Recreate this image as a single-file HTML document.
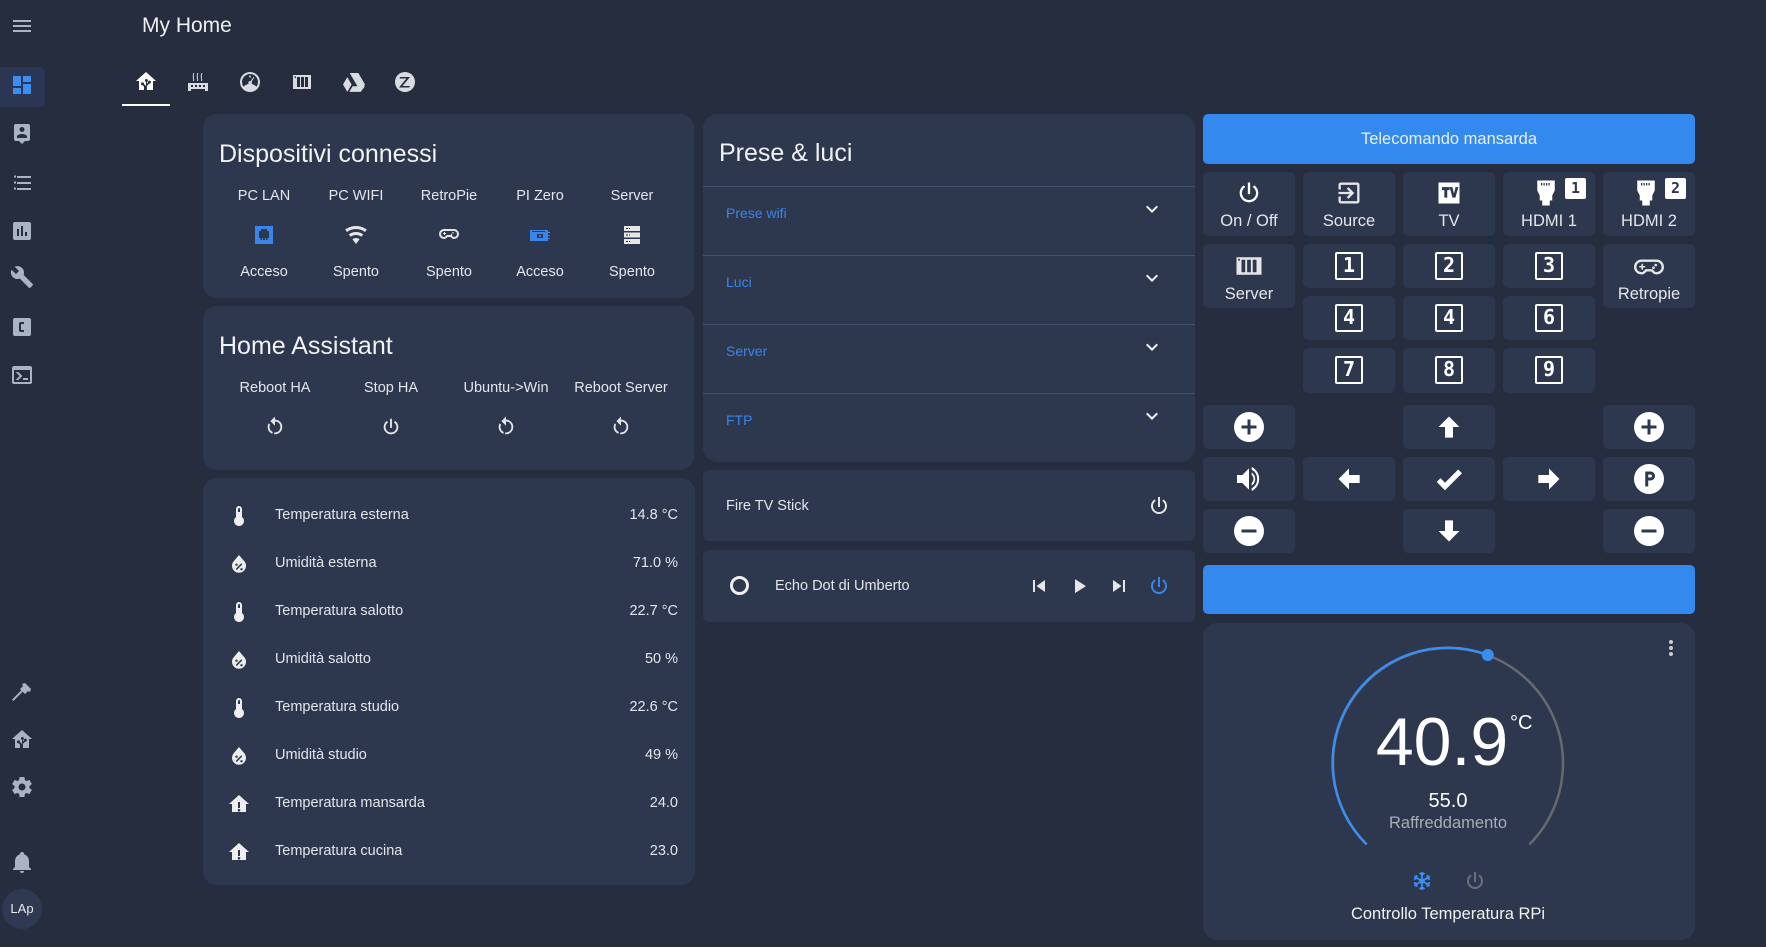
<!DOCTYPE html>
<html><head><meta charset="utf-8"><style>
*{margin:0;padding:0;box-sizing:border-box}
body{width:1766px;height:947px;background:#252d3f;font-family:"Liberation Sans",sans-serif;color:#e4e6ea;position:relative;overflow:hidden}
.a{position:absolute}
.card{position:absolute;background:#2d374e;border-radius:14px}
.btn{position:absolute;background:#2d374e;border-radius:5px;width:92px}
.sb{position:absolute;left:10px;width:24px;height:24px;fill:#a9b3c4}
.t{position:absolute;transform:translateX(-50%);white-space:nowrap;text-align:center}
.ic{position:absolute;fill:#e6e6e6}
.num{position:absolute;width:28px;height:28px;border:2.5px solid #fff;border-radius:2px;color:#fff;font-weight:bold;font-size:20px;line-height:23px;text-align:center;font-family:"DejaVu Sans Mono",monospace}
.row{position:absolute;left:0;width:492px;height:48px;font-size:14.5px}
.row .n{position:absolute;left:72px;top:15px}
.row .v{position:absolute;right:17px;top:15px}
.row svg{position:absolute;left:24px;top:12px;width:24px;height:24px;fill:#eee}
.div{position:absolute;left:0;width:492px;height:1px;background:#46506a}
.bl{position:absolute;left:23px;color:#3a86e8;font-size:14px}
.chev{position:absolute;left:437px;width:24px;height:24px;fill:#eee}
</style></head><body>
<!-- sidebar -->
<svg class="a" style="left:10px;top:14px;width:24px;height:24px;fill:#a9b3c4" viewBox="0 0 24 24"><path d="M3,6H21V8H3V6M3,11H21V13H3V11M3,16H21V18H3V16Z"/></svg>
<div class="a" style="left:0;top:67px;width:45px;height:40px;background:#2a3653;border-radius:0 5px 5px 0"></div>
<svg class="sb" style="top:73px;fill:#3b8ef0" viewBox="0 0 24 24"><path d="M13,3V9H21V3M13,21H21V11H13M3,21H11V15H3M3,13H11V3H3V13Z"/></svg>
<svg class="sb" style="top:122px" viewBox="0 0 24 24"><path d="M18 2H6A2 2 0 0 0 4 4V17A2 2 0 0 0 6 19H9L12 22L15 19H18A2 2 0 0 0 20 17V4A2 2 0 0 0 18 2M12 5A2.5 2.5 0 1 1 12 10A2.5 2.5 0 1 1 12 5M17 16H7V14.5C7 12.8 10.3 12 12 12S17 12.8 17 14.5Z"/></svg>
<svg class="sb" style="top:171px" viewBox="0 0 24 24"><path d="M7,5H21V7H7V5M7,13V11H21V13H7M4,4.5H6V6.5H4V4.5M4,10.5H6V12.5H4M4,16.5H6V18.5H4M7,19V17H21V19H7Z"/></svg>
<svg class="sb" style="top:219px" viewBox="0 0 24 24"><path d="M19 3H5A2 2 0 0 0 3 5V19A2 2 0 0 0 5 21H19A2 2 0 0 0 21 19V5A2 2 0 0 0 19 3M9 17H7V10H9M13 17H11V7H13M17 17H15V13H17Z"/></svg>
<svg class="sb" style="top:265px" viewBox="0 0 24 24"><path d="M22.7,19L13.6,9.9C14.5,7.6 14,4.9 12.1,3C10.1,1 7.1,0.6 4.7,1.7L9,6L6,9L1.6,4.7C0.4,7.1 0.9,10.1 2.9,12.1C4.8,14 7.5,14.5 9.8,13.6L18.9,22.7C19.3,23.1 19.9,23.1 20.3,22.7L22.6,20.4C23.1,20 23.1,19.3 22.7,19Z"/></svg>
<svg class="sb" style="top:315px" viewBox="0 0 24 24"><path d="M19 3H5A2 2 0 0 0 3 5V19A2 2 0 0 0 5 21H19A2 2 0 0 0 21 19V5A2 2 0 0 0 19 3M14 9H11V15H14V17H11A2 2 0 0 1 9 15V9A2 2 0 0 1 11 7H14Z"/></svg>
<svg class="sb" style="top:363px" viewBox="0 0 24 24"><path d="M20,19V7H4V19H20M20,3A2,2 0 0,1 22,5V19A2,2 0 0,1 20,21H4A2,2 0 0,1 2,19V5C2,3.89 2.9,3 4,3H20M13,17V15H18V17H13M9.58,13L5.570,9H8.4L11.7,12.3C12.09,12.69 12.09,13.33 11.7,13.72L8.42,17H5.59L9.58,13Z"/></svg>
<svg class="sb" style="top:680px" viewBox="0 0 24 24"><path d="M2 19.6L12.6 9l1.4 1.4L3.4 21z M12 4l3-1 6 6-1 3-2-1-3 3-5-5 3-3z"/></svg>
<svg class="sb" style="top:728px" viewBox="0 0 24 24"><path d="M12 2L2 11H5V20H10V16.5L8.8 15.3A1.5 1.5 0 1 1 10 14L12 16V11.9A1.5 1.5 0 1 1 12.9 11.9V13.5L14 12.4A1.5 1.5 0 1 1 15.2 13.6L12.9 15.8V20H19V11H22Z"/></svg>
<svg class="sb" style="top:775px" viewBox="0 0 24 24"><path d="M12,15.5A3.5,3.5 0 0,1 8.5,12A3.5,3.5 0 0,1 12,8.5A3.5,3.5 0 0,1 15.5,12A3.5,3.5 0 0,1 12,15.5M19.43,12.97C19.47,12.65 19.5,12.33 19.5,12C19.5,11.67 19.47,11.34 19.43,11L21.54,9.37C21.73,9.22 21.78,8.95 21.66,8.73L19.660,5.27C19.54,5.05 19.27,4.96 19.05,5.05L16.56,6.05C16.04,5.66 15.5,5.32 14.87,5.07L14.5,2.42C14.46,2.18 14.25,2 14,2H10C9.75,2 9.54,2.18 9.5,2.42L9.13,5.07C8.5,5.32 7.96,5.66 7.44,6.05L4.95,5.05C4.73,4.96 4.46,5.05 4.34,5.27L2.34,8.73C2.21,8.95 2.27,9.22 2.46,9.37L4.57,11C4.53,11.34 4.5,11.67 4.5,12C4.5,12.33 4.53,12.65 4.57,12.97L2.46,14.63C2.27,14.78 2.21,15.05 2.34,15.27L4.34,18.73C4.46,18.95 4.73,19.03 4.95,18.95L7.44,17.94C7.96,18.34 8.5,18.68 9.13,18.93L9.5,21.58C9.54,21.82 9.75,22 10,22H14C14.25,22 14.46,21.82 14.5,21.58L14.87,18.93C15.5,18.67 16.04,18.34 16.56,17.94L19.05,18.95C19.27,19.03 19.54,18.95 19.66,18.73L21.66,15.27C21.78,15.05 21.73,14.78 21.54,14.63L19.43,12.97Z"/></svg>
<svg class="sb" style="top:850px" viewBox="0 0 24 24"><path d="M21,19V20H3V19L5,17V11C5,7.9 7.03,5.17 10,4.29C10,4.19 10,4.1 10,4A2,2 0 0,1 12,2A2,2 0 0,1 14,4C14,4.1 14,4.19 14,4.29C16.97,5.17 19,7.9 19,11V17L21,19M14,21A2,2 0 0,1 12,23A2,2 0 0,1 10,21"/></svg>
<div class="a" style="left:2px;top:889px;width:40px;height:40px;border-radius:50%;background:#2f3a52;color:#e8e8e8;font-size:13px;line-height:40px;text-align:center">LAp</div>

<div class="a" style="left:142px;top:14px;font-size:21px;color:#f0f0f0">My Home</div>
<!-- tabs -->
<svg class="ic" style="left:134px;top:70px;width:24px;height:24px;fill:#fff" viewBox="0 0 24 24"><path d="M12 2L2 11H5V20H10V16.5L8.8 15.3A1.5 1.5 0 1 1 10 14L12 16V11.9A1.5 1.5 0 1 1 12.9 11.9V13.5L14 12.4A1.5 1.5 0 1 1 15.2 13.6L12.9 15.8V20H19V11H22Z"/></svg>
<div class="a" style="left:122px;top:104px;width:48px;height:2px;background:#fff"></div>
<svg class="ic" style="left:186px;top:70px;width:24px;height:24px;fill:#d8dbe0" viewBox="0 0 24 24"><path d="M2 13H22V21H19V19H5V21H2V13M5 15V17H7V15H5M9 15V17H11V15H9M13 15V17H15V15H13M17 15V17H19V15H17M7 3C8 4 6 5 7 7 6 8 8 9 7 11H8C9 9 7 8 8 7 7 5 9 4 8 3M11 3C12 4 10 5 11 7 10 8 12 9 11 11H12C13 9 11 8 12 7 11 5 13 4 12 3M15 3C16 4 14 5 15 7 14 8 16 9 15 11H16C17 9 15 8 16 7 15 5 17 4 16 3Z"/></svg>
<svg class="ic" style="left:238px;top:70px;width:24px;height:24px;fill:#d8dbe0" viewBox="0 0 24 24"><path d="M12 2A10 10 0 1 0 22 12 10 10 0 0 0 12 2M12 4A8 8 0 0 1 20 12 8 8 0 0 1 18.5 16.7 9 9 0 0 0 5.5 16.7 8 8 0 0 1 4 12 8 8 0 0 1 12 4M12 5.5A1 1 0 1 0 13 6.5 1 1 0 0 0 12 5.5M15.5 7L12.6 11.1A1.8 1.8 0 1 0 13.6 11.8L16.3 7.5Z"/></svg>
<svg class="ic" style="left:290px;top:70px;width:24px;height:24px;fill:#d8dbe0" viewBox="0 0 24 24"><path d="M3 5H21V19H3V5M4.5 6.5V8H6V6.5M7 7V17H10V7M11 7V17H14V7M15 7V17H18V7Z" fill-rule="evenodd"/></svg>
<svg class="ic" style="left:342px;top:70px;width:24px;height:24px;fill:#d8dbe0" viewBox="0 0 24 24"><path d="M7.7 3H16.3L23 14.5 18.7 21.9 12 10.4ZM1 14.5L5.3 7.1 9.6 14.5 5.3 21.9ZM10.6 16.3H23L18.7 21.9H7.3Z"/></svg>
<svg class="ic" style="left:393px;top:70px;width:24px;height:24px;fill:#d8dbe0" viewBox="0 0 24 24"><path d="M12 2A10 10 0 1 0 22 12 10 10 0 0 0 12 2M7 7H17L9.5 16H17L16 17.5H6L13.5 8.5H6.5Z"/></svg>

<!-- card 1 -->
<div class="card" style="left:203px;top:114px;width:491px;height:184px">
 <div class="a" style="left:16px;top:26px;font-size:25px;color:#f2f2f2">Dispositivi connessi</div>
 <div class="t" style="left:61px;top:74px;font-size:14.5px">PC LAN</div>
 <div class="t" style="left:153px;top:74px;font-size:14.5px">PC WIFI</div>
 <div class="t" style="left:246px;top:74px;font-size:14.5px">RetroPie</div>
 <div class="t" style="left:337px;top:74px;font-size:14.5px">PI Zero</div>
 <div class="t" style="left:429px;top:74px;font-size:14.5px">Server</div>
 <svg class="ic" style="left:49px;top:109px;width:24px;height:24px;fill:#3a86e8" viewBox="0 0 24 24"><path d="M3 3H21V21H3ZM7 8V15H8.5V17H10V15H11V17H13V15H14V17H15.5V15H17V8H15V6H9V8Z" fill-rule="evenodd"/></svg>
 <svg class="ic" style="left:141px;top:109px;width:24px;height:24px" viewBox="0 0 24 24"><path d="M12,21L15.6,16.2C14.6,15.45 13.35,15 12,15C10.65,15 9.4,15.45 8.4,16.2L12,21M12,3C7.95,3 4.21,4.34 1.2,6.6L3,9C5.5,7.12 8.62,6 12,6C15.38,6 18.5,7.12 21,9L22.8,6.6C19.79,4.34 16.05,3 12,3M12,9C9.3,9 6.81,9.89 4.8,11.4L6.6,13.8C8.1,12.67 9.97,12 12,12C14.03,12 15.9,12.67 17.4,13.8L19.2,11.4C17.19,9.89 14.7,9 12,9Z"/></svg>
 <svg class="ic" style="left:234px;top:109px;width:24px;height:24px" viewBox="0 0 24 24"><path d="M7 6H17A5 5 0 0 1 17 16C15.5 16 14.5 15 13.5 14H10.5C9.5 15 8.5 16 7 16A5 5 0 0 1 7 6M7 8A3 3 0 0 0 7 14C8 14 8.7 13 9.7 12H14.3C15.3 13 16 14 17 14A3 3 0 0 0 17 8ZM6 10H7V9H8V10H9V11H8V12H7V11H6ZM16 9A.8.8 0 1 1 16 10.6.8.8 0 1 1 16 9M14.5 10.8A.8.8 0 1 1 14.5 12.4.8.8 0 1 1 14.5 10.8Z"/></svg>
 <svg class="ic" style="left:325px;top:109px;width:24px;height:24px;fill:#3a86e8" viewBox="0 0 24 24"><path d="M2 7H20V9H22V10H20V12H22V13H20V15H22V16H20V18H2ZM9 11V15H15V11ZM11 12H13V14H11ZM4 8V9H17V8Z" fill-rule="evenodd"/></svg>
 <svg class="ic" style="left:417px;top:109px;width:24px;height:24px" viewBox="0 0 24 24"><path d="M4 3H20V8H4ZM4 9.5H20V14.5H4ZM4 16H20V21H4ZM6 5V6H8V5ZM9 5V6H10V5ZM6 11.5V12.5H8V11.5ZM9 11.5V12.5H10V11.5ZM6 18V19H8V18ZM9 18V19H10V18Z" fill-rule="evenodd"/></svg>
 <div class="t" style="left:61px;top:150px;font-size:14.5px">Acceso</div>
 <div class="t" style="left:153px;top:150px;font-size:14.5px">Spento</div>
 <div class="t" style="left:246px;top:150px;font-size:14.5px">Spento</div>
 <div class="t" style="left:337px;top:150px;font-size:14.5px">Acceso</div>
 <div class="t" style="left:429px;top:150px;font-size:14.5px">Spento</div>
</div>
<!-- card 2 -->
<div class="card" style="left:203px;top:306px;width:491px;height:164px">
 <div class="a" style="left:16px;top:26px;font-size:25px;color:#f2f2f2">Home Assistant</div>
 <div class="t" style="left:72px;top:74px;font-size:14.5px">Reboot HA</div>
 <div class="t" style="left:188px;top:74px;font-size:14.5px">Stop HA</div>
 <div class="t" style="left:303px;top:74px;font-size:14.5px">Ubuntu-&gt;Win</div>
 <div class="t" style="left:418px;top:74px;font-size:14.5px">Reboot Server</div>
 <svg class="ic" style="left:61px;top:110px;width:22px;height:22px" viewBox="0 0 24 24"><path d="M12,4C14.1,4 16.1,4.8 17.6,6.3C20.7,9.4 20.7,14.5 17.6,17.6C15.8,19.5 13.3,20.2 10.9,19.9L11.4,17.9C13.1,18.1 14.9,17.5 16.2,16.2C18.5,13.9 18.5,10.1 16.2,7.7C15.1,6.6 13.5,6 12,6V10.6L7,5.6L12,0.6V4M6.3,17.6C3.7,15 3.3,11 5.1,7.9L6.6,9.4C5.5,11.6 5.9,14.4 7.8,16.2C8.3,16.7 8.9,17.1 9.6,17.4L9,19.4C8,19 7.1,18.4 6.3,17.6Z"/></svg>
 <svg class="ic" style="left:177px;top:110px;width:22px;height:22px" viewBox="0 0 24 24"><path d="M16.56,5.44L15.11,6.89C16.84,7.94 18,9.83 18,12A6,6 0 0,1 12,18A6,6 0 0,1 6,12C6,9.83 7.16,7.94 8.88,6.88L7.44,5.44C5.36,6.88 4,9.28 4,12A8,8 0 0,0 12,20A8,8 0 0,0 20,12C20,9.28 18.64,6.88 16.56,5.44M13,3H11V13H13"/></svg>
 <svg class="ic" style="left:292px;top:110px;width:22px;height:22px" viewBox="0 0 24 24"><path d="M12,4C14.1,4 16.1,4.8 17.6,6.3C20.7,9.4 20.7,14.5 17.6,17.6C15.8,19.5 13.3,20.2 10.9,19.9L11.4,17.9C13.1,18.1 14.9,17.5 16.2,16.2C18.5,13.9 18.5,10.1 16.2,7.7C15.1,6.6 13.5,6 12,6V10.6L7,5.6L12,0.6V4M6.3,17.6C3.7,15 3.3,11 5.1,7.9L6.6,9.4C5.5,11.6 5.9,14.4 7.8,16.2C8.3,16.7 8.9,17.1 9.6,17.4L9,19.4C8,19 7.1,18.4 6.3,17.6Z"/></svg>
 <svg class="ic" style="left:407px;top:110px;width:22px;height:22px" viewBox="0 0 24 24"><path d="M12,4C14.1,4 16.1,4.8 17.6,6.3C20.7,9.4 20.7,14.5 17.6,17.6C15.8,19.5 13.3,20.2 10.9,19.9L11.4,17.9C13.1,18.1 14.9,17.5 16.2,16.2C18.5,13.9 18.5,10.1 16.2,7.7C15.1,6.6 13.5,6 12,6V10.6L7,5.6L12,0.6V4M6.3,17.6C3.7,15 3.3,11 5.1,7.9L6.6,9.4C5.5,11.6 5.9,14.4 7.8,16.2C8.3,16.7 8.9,17.1 9.6,17.4L9,19.4C8,19 7.1,18.4 6.3,17.6Z"/></svg>
</div>
<!-- card 3 sensors -->
<div class="card" style="left:203px;top:478px;width:492px;height:407px">
 <div class="row" style="top:14px"><svg viewBox="0 0 24 24"><path d="M15 13V5A3 3 0 0 0 9 5V13A5 5 0 1 0 15 13M12 4A1 1 0 0 1 13 5V8H11V5A1 1 0 0 1 12 4Z"/></svg><span class="n">Temperatura esterna</span><span class="v">14.8 °C</span></div>
 <div class="row" style="top:62px"><svg viewBox="0 0 24 24"><path d="M12 3L6.3 9.7A7 7 0 1 0 17.7 9.7ZM9.5 11.5A1.2 1.2 0 1 1 9.5 13.9 1.2 1.2 0 1 1 9.5 11.5M14.5 16.1A1.2 1.2 0 1 1 14.5 18.5 1.2 1.2 0 1 1 14.5 16.1M14.2 11.3L15.3 12.4 9.8 18 8.7 16.9Z" fill-rule="evenodd"/></svg><span class="n">Umidità esterna</span><span class="v">71.0 %</span></div>
 <div class="row" style="top:110px"><svg viewBox="0 0 24 24"><path d="M15 13V5A3 3 0 0 0 9 5V13A5 5 0 1 0 15 13M12 4A1 1 0 0 1 13 5V8H11V5A1 1 0 0 1 12 4Z"/></svg><span class="n">Temperatura salotto</span><span class="v">22.7 °C</span></div>
 <div class="row" style="top:158px"><svg viewBox="0 0 24 24"><path d="M12 3L6.3 9.7A7 7 0 1 0 17.7 9.7ZM9.5 11.5A1.2 1.2 0 1 1 9.5 13.9 1.2 1.2 0 1 1 9.5 11.5M14.5 16.1A1.2 1.2 0 1 1 14.5 18.5 1.2 1.2 0 1 1 14.5 16.1M14.2 11.3L15.3 12.4 9.8 18 8.7 16.9Z" fill-rule="evenodd"/></svg><span class="n">Umidità salotto</span><span class="v">50 %</span></div>
 <div class="row" style="top:206px"><svg viewBox="0 0 24 24"><path d="M15 13V5A3 3 0 0 0 9 5V13A5 5 0 1 0 15 13M12 4A1 1 0 0 1 13 5V8H11V5A1 1 0 0 1 12 4Z"/></svg><span class="n">Temperatura studio</span><span class="v">22.6 °C</span></div>
 <div class="row" style="top:254px"><svg viewBox="0 0 24 24"><path d="M12 3L6.3 9.7A7 7 0 1 0 17.7 9.7ZM9.5 11.5A1.2 1.2 0 1 1 9.5 13.9 1.2 1.2 0 1 1 9.5 11.5M14.5 16.1A1.2 1.2 0 1 1 14.5 18.5 1.2 1.2 0 1 1 14.5 16.1M14.2 11.3L15.3 12.4 9.8 18 8.7 16.9Z" fill-rule="evenodd"/></svg><span class="n">Umidità studio</span><span class="v">49 %</span></div>
 <div class="row" style="top:302px"><svg viewBox="0 0 24 24"><path d="M12 3L2 12H5V20H19V12H22ZM11 10H13V16H11ZM12 17A1.3 1.3 0 1 1 12 19.6 1.3 1.3 0 1 1 12 17Z" fill-rule="evenodd"/></svg><span class="n">Temperatura mansarda</span><span class="v">24.0</span></div>
 <div class="row" style="top:350px"><svg viewBox="0 0 24 24"><path d="M12 3L2 12H5V20H19V12H22ZM11 10H13V16H11ZM12 17A1.3 1.3 0 1 1 12 19.6 1.3 1.3 0 1 1 12 17Z" fill-rule="evenodd"/></svg><span class="n">Temperatura cucina</span><span class="v">23.0</span></div>
</div>

<!-- middle -->
<div class="card" style="left:703px;top:114px;width:492px;height:348px">
 <div class="a" style="left:16px;top:25px;font-size:25px;color:#f2f2f2">Prese &amp; luci</div>
 <div class="div" style="top:72px"></div>
 <div class="bl" style="top:91px">Prese wifi</div><svg class="chev" style="top:83px" viewBox="0 0 24 24"><path d="M7.41,8.58L12,13.17L16.59,8.58L18,10L12,16L6,10L7.41,8.58Z"/></svg>
 <div class="div" style="top:141px"></div>
 <div class="bl" style="top:160px">Luci</div><svg class="chev" style="top:152px" viewBox="0 0 24 24"><path d="M7.41,8.58L12,13.17L16.59,8.58L18,10L12,16L6,10L7.41,8.58Z"/></svg>
 <div class="div" style="top:210px"></div>
 <div class="bl" style="top:229px">Server</div><svg class="chev" style="top:221px" viewBox="0 0 24 24"><path d="M7.41,8.58L12,13.17L16.59,8.58L18,10L12,16L6,10L7.41,8.58Z"/></svg>
 <div class="div" style="top:279px"></div>
 <div class="bl" style="top:298px">FTP</div><svg class="chev" style="top:290px" viewBox="0 0 24 24"><path d="M7.41,8.58L12,13.17L16.59,8.58L18,10L12,16L6,10L7.41,8.58Z"/></svg>
</div>
<div class="card" style="left:703px;top:470px;width:492px;height:71px;border-radius:6px">
 <div class="a" style="left:23px;top:28px;font-size:14.5px">Fire TV Stick</div>
 <svg class="ic" style="left:444px;top:24px;width:24px;height:24px" viewBox="0 0 24 24"><path d="M16.56,5.44L15.11,6.89C16.84,7.94 18,9.83 18,12A6,6 0 0,1 12,18A6,6 0 0,1 6,12C6,9.83 7.16,7.94 8.88,6.88L7.44,5.44C5.36,6.88 4,9.28 4,12A8,8 0 0,0 12,20A8,8 0 0,0 20,12C20,9.28 18.64,6.88 16.56,5.44M13,3H11V13H13"/></svg>
</div>
<div class="card" style="left:703px;top:550px;width:492px;height:72px;border-radius:6px">
 <div class="a" style="left:27px;top:26px;width:19px;height:19px;border:3px solid #eee;border-radius:50%"></div>
 <div class="a" style="left:72px;top:28px;font-size:14.5px">Echo Dot di Umberto</div>
 <svg class="ic" style="left:324px;top:24px;width:24px;height:24px" viewBox="0 0 24 24"><path d="M6,18V6H8V18H6M9.5,12L18,6V18L9.5,12Z"/></svg>
 <svg class="ic" style="left:364px;top:24px;width:24px;height:24px" viewBox="0 0 24 24"><path d="M8,5.14V19.14L19,12.14L8,5.14Z"/></svg>
 <svg class="ic" style="left:404px;top:24px;width:24px;height:24px" viewBox="0 0 24 24"><path d="M16,18H18V6H16M6,18L14.5,12L6,6V18Z"/></svg>
 <svg class="ic" style="left:444px;top:24px;width:24px;height:24px;fill:#3a86e8" viewBox="0 0 24 24"><path d="M16.56,5.44L15.11,6.89C16.84,7.94 18,9.83 18,12A6,6 0 0,1 12,18A6,6 0 0,1 6,12C6,9.83 7.16,7.94 8.88,6.88L7.44,5.44C5.36,6.88 4,9.28 4,12A8,8 0 0,0 12,20A8,8 0 0,0 20,12C20,9.28 18.64,6.88 16.56,5.44M13,3H11V13H13"/></svg>
</div>

<!-- remote -->
<div class="a" style="left:1203px;top:114px;width:492px;height:50px;background:#3489ef;border-radius:5px;color:#e8eef8;font-size:16.5px;line-height:50px;text-align:center">Telecomando mansarda</div>
<!-- row1 -->
<div class="btn" style="left:1203px;top:172px;height:64px"><svg class="ic" style="left:32px;top:7px;width:28px;height:28px;fill:#fff" viewBox="0 0 24 24"><path d="M16.56,5.44L15.11,6.89C16.84,7.94 18,9.83 18,12A6,6 0 0,1 12,18A6,6 0 0,1 6,12C6,9.83 7.16,7.94 8.88,6.88L7.44,5.44C5.36,6.88 4,9.28 4,12A8,8 0 0,0 12,20A8,8 0 0,0 20,12C20,9.28 18.64,6.88 16.56,5.44M13,3H11V13H13"/></svg><div class="t" style="left:46px;top:40px;font-size:16.5px">On / Off</div></div>
<div class="btn" style="left:1303px;top:172px;height:64px"><svg class="ic" style="left:32px;top:7px;width:28px;height:28px" viewBox="0 0 24 24"><path d="M19 3H5A2 2 0 0 0 3 5V9H5V5H19V19H5V15H3V19A2 2 0 0 0 5 21H19A2 2 0 0 0 21 19V5A2 2 0 0 0 19 3M10.08 15.58L11.5 17L16.5 12L11.5 7L10.08 8.41L12.67 11H3V13H12.67Z"/></svg><div class="t" style="left:46px;top:40px;font-size:16.5px">Source</div></div>
<div class="btn" style="left:1403px;top:172px;height:64px"><svg class="ic" style="left:32px;top:7px;width:28px;height:28px;fill:#fff" viewBox="0 0 24 24"><path d="M3 3H21V21H3ZM6 7V9.5H8V16H10.5V9.5H12.5V7ZM12.5 7L15 16H17.5L20 7H17.6L16.25 12.5 14.9 7Z" fill-rule="evenodd"/></svg><div class="t" style="left:46px;top:40px;font-size:16.5px">TV</div></div>
<div class="btn" style="left:1503px;top:172px;height:64px"><svg class="ic" style="left:30px;top:6px;width:26px;height:30px;fill:#fff" viewBox="0 0 20 24"><path d="M3 2H17V10L15 14V18H13V22H7V18H5V14L3 10ZM6 4V6H7V4ZM8 4V6H9V4ZM10 4V6H11V4ZM12 4V6H13V4Z" fill-rule="evenodd"/></svg><div class="a" style="left:62px;top:6px;width:21px;height:21px;background:#fff;border-radius:2px;color:#2d374e;font-weight:bold;font-size:15px;line-height:21px;text-align:center;font-family:'DejaVu Sans Mono',monospace">1</div><div class="t" style="left:46px;top:40px;font-size:16.5px">HDMI 1</div></div>
<div class="btn" style="left:1603px;top:172px;height:64px"><svg class="ic" style="left:30px;top:6px;width:26px;height:30px;fill:#fff" viewBox="0 0 20 24"><path d="M3 2H17V10L15 14V18H13V22H7V18H5V14L3 10ZM6 4V6H7V4ZM8 4V6H9V4ZM10 4V6H11V4ZM12 4V6H13V4Z" fill-rule="evenodd"/></svg><div class="a" style="left:62px;top:6px;width:21px;height:21px;background:#fff;border-radius:2px;color:#2d374e;font-weight:bold;font-size:15px;line-height:21px;text-align:center;font-family:'DejaVu Sans Mono',monospace">2</div><div class="t" style="left:46px;top:40px;font-size:16.5px">HDMI 2</div></div>
<!-- row2 -->
<div class="btn" style="left:1203px;top:244px;height:64px"><svg class="ic" style="left:31px;top:7px;width:30px;height:30px" viewBox="0 0 24 24"><path d="M2 5H22V19H2ZM3.3 6.3V7.7H4.7V6.3ZM6 7V17H9V7ZM10.5 7V17H13.5V7ZM15 7V17H18V7Z" fill-rule="evenodd"/></svg><div class="t" style="left:46px;top:41px;font-size:16.5px">Server</div></div>
<div class="btn" style="left:1603px;top:244px;height:64px"><svg class="ic" style="left:28px;top:5px;width:36px;height:36px" viewBox="0 0 24 24"><path d="M7 7H17A5 5 0 0 1 17 17C15.5 17 14.5 16 13.5 15H10.5C9.5 16 8.5 17 7 17A5 5 0 0 1 7 7M7 8.6A3.4 3.4 0 0 0 7 15.4C8 15.4 8.7 14.4 9.7 13.4H14.3C15.3 14.4 16 15.4 17 15.4A3.4 3.4 0 0 0 17 8.6ZM5.5 11.3H7V9.8H8V11.3H9.5V12.3H8V13.8H7V12.3H5.5ZM16.5 9.8A.9.9 0 1 1 16.5 11.6.9.9 0 1 1 16.5 9.8M15 11.6A.9.9 0 1 1 15 13.4.9.9 0 1 1 15 11.6Z"/></svg><div class="t" style="left:46px;top:41px;font-size:16.5px">Retropie</div></div>
<div class="btn" style="left:1303px;top:244px;height:44px"><div class="num" style="left:32px;top:8px">1</div></div>
<div class="btn" style="left:1403px;top:244px;height:44px"><div class="num" style="left:32px;top:8px">2</div></div>
<div class="btn" style="left:1503px;top:244px;height:44px"><div class="num" style="left:32px;top:8px">3</div></div>
<div class="btn" style="left:1303px;top:296px;height:44px"><div class="num" style="left:32px;top:8px">4</div></div>
<div class="btn" style="left:1403px;top:296px;height:44px"><div class="num" style="left:32px;top:8px">4</div></div>
<div class="btn" style="left:1503px;top:296px;height:44px"><div class="num" style="left:32px;top:8px">6</div></div>
<div class="btn" style="left:1303px;top:348px;height:45px"><div class="num" style="left:32px;top:8px">7</div></div>
<div class="btn" style="left:1403px;top:348px;height:45px"><div class="num" style="left:32px;top:8px">8</div></div>
<div class="btn" style="left:1503px;top:348px;height:45px"><div class="num" style="left:32px;top:8px">9</div></div>
<!-- arrows -->
<div class="btn" style="left:1203px;top:405px;height:44px"><svg class="ic" style="left:28px;top:4px;width:36px;height:36px;fill:#fff" viewBox="0 0 24 24"><path d="M17,13H13V17H11V13H7V11H11V7H13V11H17M12,2A10,10 0 0,0 2,12A10,10 0 0,0 12,22A10,10 0 0,0 22,12A10,10 0 0,0 12,2Z"/></svg></div>
<div class="btn" style="left:1403px;top:405px;height:44px"><svg class="ic" style="left:30px;top:6px;width:32px;height:32px;fill:#fff" viewBox="0 0 24 24"><path d="M15,20H9V12H4.16L12,4.16L19.84,12H15V20Z"/></svg></div>
<div class="btn" style="left:1603px;top:405px;height:44px"><svg class="ic" style="left:28px;top:4px;width:36px;height:36px;fill:#fff" viewBox="0 0 24 24"><path d="M17,13H13V17H11V13H7V11H11V7H13V11H17M12,2A10,10 0 0,0 2,12A10,10 0 0,0 12,22A10,10 0 0,0 22,12A10,10 0 0,0 12,2Z"/></svg></div>
<div class="btn" style="left:1203px;top:457px;height:44px"><svg class="ic" style="left:30px;top:6px;width:32px;height:32px;fill:#fff" viewBox="0 0 24 24"><path d="M3 9H7L12 4V20L7 15H3ZM14 7A6 6 0 0 1 14 17V15A4 4 0 0 0 14 9ZM14 3A10 10 0 0 1 14 21V19A8 8 0 0 0 14 5Z"/></svg></div>
<div class="btn" style="left:1303px;top:457px;height:44px"><svg class="ic" style="left:30px;top:6px;width:32px;height:32px;fill:#fff" viewBox="0 0 24 24"><path d="M20,9V15H12V19.84L4.16,12L12,4.16V9H20Z"/></svg></div>
<div class="btn" style="left:1403px;top:457px;height:44px"><svg class="ic" style="left:30px;top:6px;width:32px;height:32px;fill:#fff" viewBox="0 0 24 24"><path d="M9,20.42L2.79,14.21L5.62,11.38L9,14.77L18.88,4.88L21.71,7.71L9,20.42Z"/></svg></div>
<div class="btn" style="left:1503px;top:457px;height:44px"><svg class="ic" style="left:30px;top:6px;width:32px;height:32px;fill:#fff" viewBox="0 0 24 24"><path d="M4,15V9H12V4.16L19.84,12L12,19.84V15H4Z"/></svg></div>
<div class="btn" style="left:1603px;top:457px;height:44px"><svg class="ic" style="left:28px;top:4px;width:36px;height:36px;fill:#fff" viewBox="0 0 24 24"><path d="M12 2A10 10 0 1 0 22 12 10 10 0 0 0 12 2M9.5 7H13A3 3 0 0 1 13 13H11.5V17H9.5ZM11.5 9V11H13A1 1 0 0 0 13 9Z" fill-rule="evenodd"/></svg></div>
<div class="btn" style="left:1203px;top:509px;height:44px"><svg class="ic" style="left:28px;top:4px;width:36px;height:36px;fill:#fff" viewBox="0 0 24 24"><path d="M17,13H7V11H17M12,2A10,10 0 0,0 2,12A10,10 0 0,0 12,22A10,10 0 0,0 22,12A10,10 0 0,0 12,2Z"/></svg></div>
<div class="btn" style="left:1403px;top:509px;height:44px"><svg class="ic" style="left:30px;top:6px;width:32px;height:32px;fill:#fff" viewBox="0 0 24 24"><path d="M9,4H15V12H19.84L12,19.84L4.16,12H9V4Z"/></svg></div>
<div class="btn" style="left:1603px;top:509px;height:44px"><svg class="ic" style="left:28px;top:4px;width:36px;height:36px;fill:#fff" viewBox="0 0 24 24"><path d="M17,13H7V11H17M12,2A10,10 0 0,0 2,12A10,10 0 0,0 12,22A10,10 0 0,0 22,12A10,10 0 0,0 12,2Z"/></svg></div>

<div class="a" style="left:1203px;top:565px;width:492px;height:49px;background:#3489ef;border-radius:5px"></div>

<!-- thermostat -->
<div class="card" style="left:1203px;top:623px;width:492px;height:317px">
 <svg class="ic" style="left:456px;top:13px;width:24px;height:24px;fill:#ccc" viewBox="0 0 24 24"><path d="M12,16A2,2 0 0,1 14,18A2,2 0 0,1 12,20A2,2 0 0,1 10,18A2,2 0 0,1 12,16M12,10A2,2 0 0,1 14,12A2,2 0 0,1 12,14A2,2 0 0,1 10,12A2,2 0 0,1 12,10M12,4A2,2 0 0,1 14,6A2,2 0 0,1 12,8A2,2 0 0,1 10,6A2,2 0 0,1 12,4Z"/></svg>
</div>
<svg class="a" style="left:0;top:0;width:1766px;height:947px" viewBox="0 0 1766 947">
 <path d="M1366.6 844.4 A115 115 0 1 1 1529.4 844.4" fill="none" stroke="#666a70" stroke-width="2.5"/>
 <path d="M1366.6 844.4 A115 115 0 0 1 1487.8 655" fill="none" stroke="#3b8ef0" stroke-width="2.5"/>
 <circle cx="1487.8" cy="655" r="6" fill="#3b8ef0"/>
</svg>
<div class="t" style="left:1442px;top:708px;font-size:68px;color:#fff;line-height:1">40.9</div>
<div class="a" style="left:1510px;top:712px;font-size:20px;color:#fff">°C</div>
<div class="t" style="left:1448px;top:790px;font-size:20px;color:#fff">55.0</div>
<div class="t" style="left:1448px;top:814px;font-size:16.5px;color:#a8adb6">Raffreddamento</div>
<svg class="ic" style="left:1410px;top:869px;width:24px;height:24px;fill:none;stroke:#3b8ef0;stroke-width:1.8" viewBox="0 0 24 24"><path d="M12 3V21M4.2 7.5L19.8 16.5M4.2 16.5L19.8 7.5M9.5 4L12 6 14.5 4M9.5 20L12 18 14.5 20M4 10.5L6.8 9 6.3 6M20 13.5L17.2 15 17.7 18M4 13.5L6.8 15 6.3 18M20 10.5L17.2 9 17.7 6"/><circle cx="12" cy="12" r="2"/></svg>
<svg class="ic" style="left:1463px;top:869px;width:24px;height:24px;fill:#6b7078" viewBox="0 0 24 24"><path d="M16.56,5.44L15.11,6.89C16.84,7.94 18,9.83 18,12A6,6 0 0,1 12,18A6,6 0 0,1 6,12C6,9.83 7.16,7.94 8.88,6.88L7.44,5.44C5.36,6.88 4,9.28 4,12A8,8 0 0,0 12,20A8,8 0 0,0 20,12C20,9.28 18.64,6.88 16.56,5.44M13,3H11V13H13"/></svg>
<div class="t" style="left:1448px;top:905px;font-size:16.5px;color:#f2f2f2">Controllo Temperatura RPi</div>
</body></html>
